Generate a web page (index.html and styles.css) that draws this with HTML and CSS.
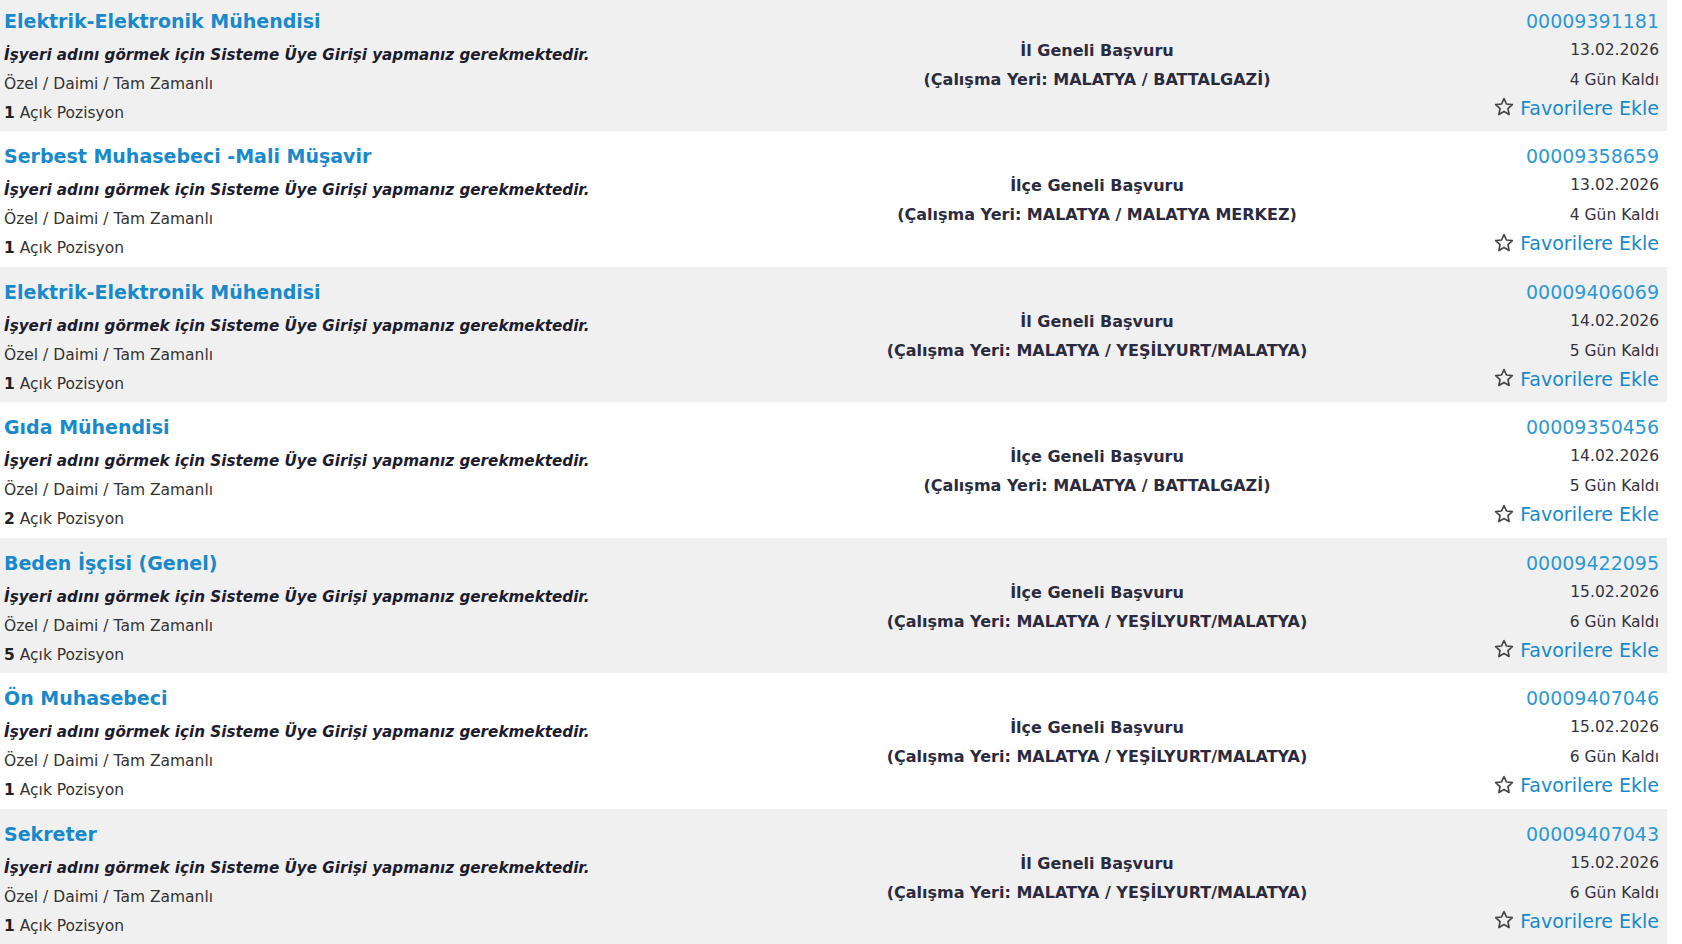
FILE: index.html
```html
<!DOCTYPE html>
<html lang="tr">
<head>
<meta charset="utf-8">
<title>İş İlanları</title>
<link rel="stylesheet" href="styles.css">
</head>
<body>
<div class="page">
  <div class="list">
    <div class="row odd">
      <div class="col-left">
        <a class="title">Elektrik-Elektronik Mühendisi</a>
        <div class="employer">İşyeri adını görmek için Sisteme Üye Girişi yapmanız gerekmektedir.</div>
        <div class="meta">Özel / Daimi / Tam Zamanlı</div>
        <div class="meta"><b>1</b> Açık Pozisyon</div>
      </div>
      <div class="col-mid">
        <div class="scope">İl Geneli Başvuru</div>
        <div class="scope">(Çalışma Yeri: MALATYA / BATTALGAZİ)</div>
      </div>
      <div class="col-right">
        <a class="code">00009391181</a>
        <div class="info">13.02.2026</div>
        <div class="info">4 Gün Kaldı</div>
        <a class="fav"><svg class="star" viewBox="0 0 24 24"><path d="M12 2.8l2.7 5.9 6.4.7-4.8 4.4 1.3 6.4L12 17l-5.6 3.2 1.3-6.4-4.8-4.4 6.4-.7z"/></svg>Favorilere Ekle</a>
      </div>
    </div>
    <div class="row even">
      <div class="col-left">
        <a class="title">Serbest Muhasebeci -Mali Müşavir</a>
        <div class="employer">İşyeri adını görmek için Sisteme Üye Girişi yapmanız gerekmektedir.</div>
        <div class="meta">Özel / Daimi / Tam Zamanlı</div>
        <div class="meta"><b>1</b> Açık Pozisyon</div>
      </div>
      <div class="col-mid">
        <div class="scope">İlçe Geneli Başvuru</div>
        <div class="scope">(Çalışma Yeri: MALATYA / MALATYA MERKEZ)</div>
      </div>
      <div class="col-right">
        <a class="code">00009358659</a>
        <div class="info">13.02.2026</div>
        <div class="info">4 Gün Kaldı</div>
        <a class="fav"><svg class="star" viewBox="0 0 24 24"><path d="M12 2.8l2.7 5.9 6.4.7-4.8 4.4 1.3 6.4L12 17l-5.6 3.2 1.3-6.4-4.8-4.4 6.4-.7z"/></svg>Favorilere Ekle</a>
      </div>
    </div>
    <div class="row odd">
      <div class="col-left">
        <a class="title">Elektrik-Elektronik Mühendisi</a>
        <div class="employer">İşyeri adını görmek için Sisteme Üye Girişi yapmanız gerekmektedir.</div>
        <div class="meta">Özel / Daimi / Tam Zamanlı</div>
        <div class="meta"><b>1</b> Açık Pozisyon</div>
      </div>
      <div class="col-mid">
        <div class="scope">İl Geneli Başvuru</div>
        <div class="scope">(Çalışma Yeri: MALATYA / YEŞİLYURT/MALATYA)</div>
      </div>
      <div class="col-right">
        <a class="code">00009406069</a>
        <div class="info">14.02.2026</div>
        <div class="info">5 Gün Kaldı</div>
        <a class="fav"><svg class="star" viewBox="0 0 24 24"><path d="M12 2.8l2.7 5.9 6.4.7-4.8 4.4 1.3 6.4L12 17l-5.6 3.2 1.3-6.4-4.8-4.4 6.4-.7z"/></svg>Favorilere Ekle</a>
      </div>
    </div>
    <div class="row even">
      <div class="col-left">
        <a class="title">Gıda Mühendisi</a>
        <div class="employer">İşyeri adını görmek için Sisteme Üye Girişi yapmanız gerekmektedir.</div>
        <div class="meta">Özel / Daimi / Tam Zamanlı</div>
        <div class="meta"><b>2</b> Açık Pozisyon</div>
      </div>
      <div class="col-mid">
        <div class="scope">İlçe Geneli Başvuru</div>
        <div class="scope">(Çalışma Yeri: MALATYA / BATTALGAZİ)</div>
      </div>
      <div class="col-right">
        <a class="code">00009350456</a>
        <div class="info">14.02.2026</div>
        <div class="info">5 Gün Kaldı</div>
        <a class="fav"><svg class="star" viewBox="0 0 24 24"><path d="M12 2.8l2.7 5.9 6.4.7-4.8 4.4 1.3 6.4L12 17l-5.6 3.2 1.3-6.4-4.8-4.4 6.4-.7z"/></svg>Favorilere Ekle</a>
      </div>
    </div>
    <div class="row odd">
      <div class="col-left">
        <a class="title">Beden İşçisi (Genel)</a>
        <div class="employer">İşyeri adını görmek için Sisteme Üye Girişi yapmanız gerekmektedir.</div>
        <div class="meta">Özel / Daimi / Tam Zamanlı</div>
        <div class="meta"><b>5</b> Açık Pozisyon</div>
      </div>
      <div class="col-mid">
        <div class="scope">İlçe Geneli Başvuru</div>
        <div class="scope">(Çalışma Yeri: MALATYA / YEŞİLYURT/MALATYA)</div>
      </div>
      <div class="col-right">
        <a class="code">00009422095</a>
        <div class="info">15.02.2026</div>
        <div class="info">6 Gün Kaldı</div>
        <a class="fav"><svg class="star" viewBox="0 0 24 24"><path d="M12 2.8l2.7 5.9 6.4.7-4.8 4.4 1.3 6.4L12 17l-5.6 3.2 1.3-6.4-4.8-4.4 6.4-.7z"/></svg>Favorilere Ekle</a>
      </div>
    </div>
    <div class="row even">
      <div class="col-left">
        <a class="title">Ön Muhasebeci</a>
        <div class="employer">İşyeri adını görmek için Sisteme Üye Girişi yapmanız gerekmektedir.</div>
        <div class="meta">Özel / Daimi / Tam Zamanlı</div>
        <div class="meta"><b>1</b> Açık Pozisyon</div>
      </div>
      <div class="col-mid">
        <div class="scope">İlçe Geneli Başvuru</div>
        <div class="scope">(Çalışma Yeri: MALATYA / YEŞİLYURT/MALATYA)</div>
      </div>
      <div class="col-right">
        <a class="code">00009407046</a>
        <div class="info">15.02.2026</div>
        <div class="info">6 Gün Kaldı</div>
        <a class="fav"><svg class="star" viewBox="0 0 24 24"><path d="M12 2.8l2.7 5.9 6.4.7-4.8 4.4 1.3 6.4L12 17l-5.6 3.2 1.3-6.4-4.8-4.4 6.4-.7z"/></svg>Favorilere Ekle</a>
      </div>
    </div>
    <div class="row odd">
      <div class="col-left">
        <a class="title">Sekreter</a>
        <div class="employer">İşyeri adını görmek için Sisteme Üye Girişi yapmanız gerekmektedir.</div>
        <div class="meta">Özel / Daimi / Tam Zamanlı</div>
        <div class="meta"><b>1</b> Açık Pozisyon</div>
      </div>
      <div class="col-mid">
        <div class="scope">İl Geneli Başvuru</div>
        <div class="scope">(Çalışma Yeri: MALATYA / YEŞİLYURT/MALATYA)</div>
      </div>
      <div class="col-right">
        <a class="code">00009407043</a>
        <div class="info">15.02.2026</div>
        <div class="info">6 Gün Kaldı</div>
        <a class="fav"><svg class="star" viewBox="0 0 24 24"><path d="M12 2.8l2.7 5.9 6.4.7-4.8 4.4 1.3 6.4L12 17l-5.6 3.2 1.3-6.4-4.8-4.4 6.4-.7z"/></svg>Favorilere Ekle</a>
      </div>
    </div>
  </div>
</div>
</body>
</html>
```

FILE: styles.css
```css
html, body {
  margin: 0;
  padding: 0;
  background: #ffffff;
  overflow: hidden;
}
body {
  font-family: "DejaVu Sans", Verdana, sans-serif;
  color: #333;
}
.page {
  width: 1667px;
  margin-top: -4.5px;
}
.list {
  display: flex;
  flex-direction: column;
}
.row {
  height: 135.5px;
  display: grid;
  grid-template-columns: 827px 532px 1fr;
  box-sizing: border-box;
  padding: 11px 8px 0 4px;
}
.row.odd { background: #f0f0f0; }
.row.even { background: #ffffff; }

.col-left, .col-right {
  display: flex;
  flex-direction: column;
}
.col-left { align-items: flex-start; }
.col-right { align-items: flex-end; }

.title {
  font-weight: bold;
  font-size: 19px;
  line-height: 29px;
  color: #1889cb;
  margin-bottom: 5px;
}
.employer {
  font-size: 15.2px;
  font-weight: bold;
  font-style: italic;
  line-height: 29px;
  color: #1c1c2e;
}
.meta {
  font-size: 15.5px;
  line-height: 29px;
  color: #333;
}
.meta b { color: #222; }

.col-mid {
  display: flex;
  flex-direction: column;
  align-items: center;
  padding-top: 29px;
}
.scope {
  font-weight: bold;
  font-size: 16px;
  line-height: 29px;
  color: #2b2b3f;
}

.code {
  font-size: 19px;
  line-height: 29px;
  color: #2c99d5;
}
.info {
  font-size: 15.5px;
  line-height: 29px;
  color: #333340;
}
.info + .info { margin-top: 1px; margin-bottom: -1px; }
.fav {
  display: flex;
  align-items: center;
  gap: 5px;
  font-size: 19px;
  line-height: 29px;
  color: #1889cb;
}
.star {
  width: 22px;
  height: 22px;
  margin-top: -2px;
  fill: none;
  stroke: #444;
  stroke-width: 1.8;
  stroke-linejoin: round;
}
```
